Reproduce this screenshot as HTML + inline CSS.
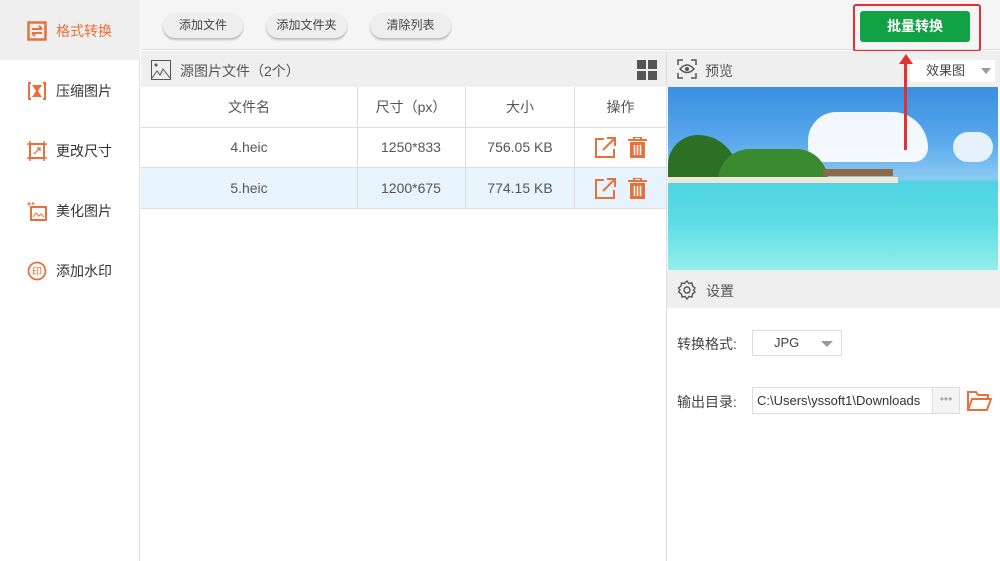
<!DOCTYPE html>
<html><head><meta charset="utf-8"><style>
*{margin:0;padding:0;box-sizing:border-box}
body{width:1000px;height:561px;overflow:hidden;font-family:"Liberation Sans","Noto Sans CJK SC",sans-serif;font-size:14px;color:#333;background:#fff;position:relative}
.abs{position:absolute}
.side{left:0;top:0;width:140px;height:561px;background:#fff;border-right:1px solid #ddd}
.nav{position:absolute;left:0;width:140px;height:60px;display:flex;align-items:center;padding-left:27px;font-size:14px;color:#333}
.nav svg{margin-right:9px}
.btn{position:absolute;top:13px;height:25px;border-radius:13px;background:#eee;box-shadow:0 2px 2px #bbb;font-size:12px;color:#444;text-align:center;line-height:25px}
.row{position:absolute;left:141px;width:525px;height:41px;border-bottom:1px solid #ddd}
.cell{position:absolute;top:0;height:100%;display:flex;align-items:center;justify-content:center;border-right:1px solid #ddd;font-size:14px;color:#555}
</style></head><body>
<div class="abs side"></div>
<div class="abs" style="left:0;top:0;width:140px;height:60px;background:#efefef"></div>
<div class="nav" style="top:1px;color:#e8703a">
<svg width="20" height="20" viewBox="0 0 20 20"><rect x="1.5" y="1.5" width="17" height="17" fill="none" stroke="#e8703a" stroke-width="2.5"/><path d="M5 8h10M12 5l3 3M15 12H5M8 15l-3-3" stroke="#e8703a" stroke-width="2" fill="none"/></svg>格式转换</div>
<div class="nav" style="top:61px"><svg width="20" height="20" viewBox="0 0 20 20"><path d="M4 2H2v16h2M16 2h2v16h-2" stroke="#e8703a" stroke-width="2" fill="none"/><path d="M5 4h10l-4 6 4 6H5l4-6z" fill="#e8703a"/></svg>压缩图片</div>
<div class="nav" style="top:121px"><svg width="20" height="20" viewBox="0 0 20 20"><rect x="3" y="3" width="14" height="14" fill="none" stroke="#e8703a" stroke-width="2"/><path d="M0 3h20M0 17h20M3 0v20M17 0v20" stroke="#e8703a" stroke-width="1.5"/><path d="M7 13l6-6M10 7h3v3" stroke="#e8703a" stroke-width="1.3" fill="none"/></svg>更改尺寸</div>
<div class="nav" style="top:181px"><svg width="20" height="20" viewBox="0 0 20 20"><rect x="4" y="6" width="15" height="13" fill="none" stroke="#e8703a" stroke-width="2"/><path d="M2 1v4M0 3h4M6 1v3M4.5 2.5h3" stroke="#e8703a" stroke-width="1"/><path d="M6 16l3-4 3 3 2-2 3 3" stroke="#e8703a" fill="none"/></svg>美化图片</div>
<div class="nav" style="top:241px"><svg width="20" height="20" viewBox="0 0 20 20"><circle cx="10" cy="10" r="8.5" fill="none" stroke="#e8703a" stroke-width="1.8"/><text x="10" y="14" font-size="10" text-anchor="middle" fill="#e8703a" font-family="Noto Sans CJK SC">印</text></svg>添加水印</div>

<div class="abs" style="left:141px;top:0;width:859px;height:50px;background:#f5f5f5;border-bottom:1px solid #ddd"></div>
<div class="btn" style="left:163px;width:80px">添加文件</div>
<div class="btn" style="left:266px;width:81px">添加文件夹</div>
<div class="btn" style="left:370px;width:81px">清除列表</div>
<div class="abs" style="left:853px;top:4px;width:128px;height:48px;border:2px solid #e53030;border-radius:3px"></div>
<div class="abs" style="left:860px;top:11px;width:110px;height:31px;background:#12a144;border-radius:3px;color:#fff;font-weight:bold;font-size:14px;text-align:center;line-height:31px">批量转换</div>

<div class="abs" style="left:141px;top:51px;width:525px;height:36px;background:#efefef"></div>
<svg class="abs" style="left:151px;top:60px" width="20" height="20" viewBox="0 0 20 20"><rect x="0.5" y="0.5" width="19" height="19" fill="none" stroke="#555"/><circle cx="5" cy="5" r="1.5" fill="#555"/><path d="M1 18l5-7 3 4 3-6 7 9" stroke="#555" fill="none"/></svg>
<div class="abs" style="left:180px;top:61px;font-size:14px;color:#555">源图片文件（2个）</div>
<svg class="abs" style="left:637px;top:60px" width="20" height="20"><rect x="0" y="0" width="9" height="9" fill="#555"/><rect x="11" y="0" width="9" height="9" fill="#555"/><rect x="0" y="11" width="9" height="9" fill="#555"/><rect x="11" y="11" width="9" height="9" fill="#555"/></svg>

<div class="row" style="top:87px">
<div class="cell" style="left:0;width:217px">文件名</div><div class="cell" style="left:216px;width:109px">尺寸（px）</div><div class="cell" style="left:325px;width:109px">大小</div><div class="cell" style="left:434px;width:91px;border-right:none">操作</div></div>
<div class="row" style="top:127px">
<div class="cell" style="left:0;width:217px">4.heic</div><div class="cell" style="left:216px;width:109px">1250*833</div><div class="cell" style="left:325px;width:109px">756.05 KB</div><div class="cell" style="left:434px;width:91px;border-right:none;gap:12px"><svg width="21" height="21" viewBox="0 0 21 21"><path d="M9 2H1v18h18v-8" stroke="#e8703a" stroke-width="2" fill="none"/><path d="M8 13L19 2M12 1h8v8" stroke="#e8703a" stroke-width="2" fill="none"/></svg><svg width="19" height="21" viewBox="0 0 19 21"><path d="M0 3h19M6 3V0h7v3" stroke="#e8703a" stroke-width="2" fill="none"/><path d="M2 5h15v16H2z" fill="#e8703a"/><path d="M6.5 8v10M9.5 8v10M12.5 8v10" stroke="#fff" stroke-width="1.5"/></svg></div></div>
<div class="row" style="top:168px;background:#e8f4fd">
<div class="cell" style="left:0;width:217px">5.heic</div><div class="cell" style="left:216px;width:109px">1200*675</div><div class="cell" style="left:325px;width:109px">774.15 KB</div><div class="cell" style="left:434px;width:91px;border-right:none;gap:12px"><svg width="21" height="21" viewBox="0 0 21 21"><path d="M9 2H1v18h18v-8" stroke="#e8703a" stroke-width="2" fill="none"/><path d="M8 13L19 2M12 1h8v8" stroke="#e8703a" stroke-width="2" fill="none"/></svg><svg width="19" height="21" viewBox="0 0 19 21"><path d="M0 3h19M6 3V0h7v3" stroke="#e8703a" stroke-width="2" fill="none"/><path d="M2 5h15v16H2z" fill="#e8703a"/><path d="M6.5 8v10M9.5 8v10M12.5 8v10" stroke="#fff" stroke-width="1.5"/></svg></div></div>
<div class="abs" style="left:666px;top:51px;width:1px;height:510px;background:#ddd"></div>

<div class="abs" style="left:667px;top:51px;width:333px;height:36px;background:#efefef"></div>
<svg class="abs" style="left:677px;top:59px" width="20" height="20" viewBox="0 0 20 20"><path d="M1 6V1h5M14 1h5v5M19 14v5h-5M6 19H1v-5" stroke="#555" stroke-width="1.5" fill="none"/><path d="M3 10q7-8 14 0q-7 7-14 0z" stroke="#555" stroke-width="1.5" fill="none"/><circle cx="10" cy="10" r="2" fill="#555"/></svg>
<div class="abs" style="left:705px;top:61px;color:#555">预览</div>
<div class="abs" style="left:910px;top:60px;width:85px;height:22px;background:#fff;font-size:13px;color:#444;padding-left:16px;line-height:22px">效果图<span style="position:absolute;right:4px;top:8px;border:5px solid transparent;border-top:6px solid #999"></span></div>

<div class="abs" style="left:668px;top:87px;width:330px;height:183px;background:linear-gradient(#3a8fe0 0%,#5aa8ec 30%,#8ccaf2 50%,#4fd3e2 52%,#5fdde6 75%,#93eeea 100%);overflow:hidden">
<div class="abs" style="left:140px;top:25px;width:120px;height:50px;background:#fff;border-radius:40px 50px 20px 20px;opacity:.92"></div>
<div class="abs" style="left:285px;top:45px;width:40px;height:30px;background:#e6f2fb;border-radius:20px"></div>
<div class="abs" style="left:0;top:48px;width:70px;height:46px;background:#2c7026;border-radius:30px 40px 0 0"></div>
<div class="abs" style="left:50px;top:62px;width:110px;height:32px;background:#3a8a30;border-radius:40px 40px 0 0"></div>
<div class="abs" style="left:0;top:90px;width:230px;height:6px;background:#efe9d4"></div>
<div class="abs" style="left:155px;top:82px;width:70px;height:7px;background:#8a6a4a"></div>
</div>
<div class="abs" style="left:904px;top:60px;width:3px;height:90px;background:#e53030"></div>
<div class="abs" style="left:899px;top:54px;border:7px solid transparent;border-bottom:10px solid #e53030;border-top:0"></div>

<div class="abs" style="left:667px;top:270px;width:333px;height:38px;background:#efefef"></div>
<svg class="abs" style="left:677px;top:280px" width="20" height="20" viewBox="0 0 20 20"><path d="M10 1l2 2.5 3-.5.5 3 2.5 2-1.5 2 1.5 2-2.5 2-.5 3-3-.5-2 2.5-2-2.5-3 .5-.5-3L1.5 12 3 10 1.5 8 4 6l.5-3 3 .5z" stroke="#555" stroke-width="1.4" fill="none"/><circle cx="10" cy="10" r="3" stroke="#555" stroke-width="1.4" fill="none"/></svg>
<div class="abs" style="left:706px;top:281px;color:#555">设置</div>
<div class="abs" style="left:677px;top:334px;color:#444">转换格式:</div>
<div class="abs" style="left:752px;top:330px;width:90px;height:26px;border:1px solid #ddd;font-size:13px;padding-left:21px;line-height:24px;color:#444">JPG<span style="position:absolute;right:8px;top:10px;border:6px solid transparent;border-top:6px solid #999"></span></div>
<div class="abs" style="left:677px;top:392px;color:#444">输出目录:</div>
<div class="abs" style="left:752px;top:387px;width:208px;height:27px;border:1px solid #ddd;font-size:13px;padding-left:4px;line-height:26px;color:#333">C:\Users\yssoft1\Downloads</div>
<div class="abs" style="left:932px;top:388px;width:27px;height:25px;background:#f3f3f3;border-left:1px solid #ddd;color:#aaa;text-align:center;line-height:22px;font-size:12px">•••</div>
<svg class="abs" style="left:967px;top:390px" width="25" height="22" viewBox="0 0 25 22"><path d="M1 20V2h8l2 3h10v4" stroke="#e8703a" stroke-width="2" fill="none"/><path d="M1 20l4-11h19l-4 11z" stroke="#e8703a" stroke-width="2" fill="none"/></svg>
</body></html>
